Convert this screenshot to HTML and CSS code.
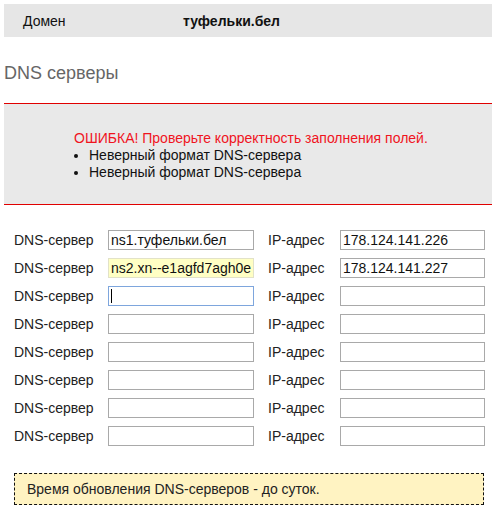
FILE: index.html
```html
<!DOCTYPE html>
<html lang="ru">
<head>
<meta charset="utf-8">
<title>DNS серверы</title>
<link rel="stylesheet" href="styles.css">
</head>
<body>
<div class="page">
  <div class="domain-bar">
    <span class="domain-label">Домен</span>
    <span class="domain-value">туфельки.бел</span>
  </div>
  <h2 class="section-title">DNS серверы</h2>
  <div class="error-box">
    <div class="error-inner">
      <div class="error-title">ОШИБКА! Проверьте корректность заполнения полей.</div>
      <ul class="error-list">
        <li>Неверный формат DNS-сервера</li>
        <li>Неверный формат DNS-сервера</li>
      </ul>
    </div>
  </div>
  <form class="dns-form">
    <div class="dns-row">
      <label class="lbl">DNS-сервер</label><input class="field" type="text" value="ns1.туфельки.бел">
      <label class="lbl">IP-адрес</label><input class="field ip" type="text" value="178.124.141.226">
    </div>
    <div class="dns-row">
      <label class="lbl">DNS-сервер</label><input class="field invalid" type="text" value="ns2.xn--e1agfd7agh0e.xn--90ais">
      <label class="lbl">IP-адрес</label><input class="field ip" type="text" value="178.124.141.227">
    </div>
    <div class="dns-row">
      <label class="lbl">DNS-сервер</label><span class="field focused"><span class="caret"></span></span>
      <label class="lbl">IP-адрес</label><input class="field ip" type="text">
    </div>
    <div class="dns-row">
      <label class="lbl">DNS-сервер</label><input class="field" type="text">
      <label class="lbl">IP-адрес</label><input class="field ip" type="text">
    </div>
    <div class="dns-row">
      <label class="lbl">DNS-сервер</label><input class="field" type="text">
      <label class="lbl">IP-адрес</label><input class="field ip" type="text">
    </div>
    <div class="dns-row">
      <label class="lbl">DNS-сервер</label><input class="field" type="text">
      <label class="lbl">IP-адрес</label><input class="field ip" type="text">
    </div>
    <div class="dns-row">
      <label class="lbl">DNS-сервер</label><input class="field" type="text">
      <label class="lbl">IP-адрес</label><input class="field ip" type="text">
    </div>
    <div class="dns-row">
      <label class="lbl">DNS-сервер</label><input class="field" type="text">
      <label class="lbl">IP-адрес</label><input class="field ip" type="text">
    </div>
  </form>
  <div class="note">Время обновления DNS-серверов - до суток.</div>
</div>
</body>
</html>
```
FILE: styles.css
```css
html, body {
  margin: 0;
  padding: 0;
  background: #fff;
}
body {
  font-family: "Liberation Sans", Arial, sans-serif;
  font-size: 14px;
  color: #222;
  overflow: hidden;
}
.page {
  padding: 4px 0 0 4px;
  width: 488px;
}
.domain-bar {
  background: #e6e6e6;
  height: 33px;
  display: flex;
  align-items: center;
  font-size: 14px;
  color: #111;
}
.domain-label {
  padding-left: 19px;
  width: 160px;
}
.domain-value {
  font-weight: bold;
}
.section-title {
  margin: 0;
  font-weight: normal;
  font-size: 18px;
  color: #666;
  height: 66px;
  line-height: 22px;
  padding-top: 25px;
  box-sizing: border-box;
}
.error-box {
  background: #e9e9e9;
  border-top: 1px solid #e00000;
  border-bottom: 1px solid #e00000;
  height: 102px;
  box-sizing: border-box;
  padding: 26px 0 0 70px;
}
.error-title {
  color: #f0141e;
  line-height: 17px;
}
.error-list {
  margin: 0;
  padding: 0 0 0 15px;
  line-height: 17px;
  color: #111;
}
.error-list li {
  list-style: disc;
}
.dns-form {
  margin: 21px 0 0 0;
  padding-left: 10px;
}
.dns-row {
  display: grid;
  grid-template-columns: 94px 146px 86px 145px;
  align-items: center;
  height: 28px;
}
.lbl {
  color: #222;
}
.dns-row .lbl:nth-of-type(2) {
  padding-left: 14px;
}
.field {
  box-sizing: border-box;
  height: 20px;
  width: 146px;
  border: 1px solid #a9a9a9;
  background: #fff;
  font-family: "Liberation Sans", Arial, sans-serif;
  font-size: 14px;
  color: #111;
  padding: 0 2px;
  margin: 0;
  outline: none;
  display: block;
}
.field.ip {
  width: 145px;
}
.field.invalid {
  background: #ffffc4;
  border-color: #e2e2c8;
}
.field.focused {
  border-color: #7ea6dd;
  display: flex;
  align-items: center;
  padding-left: 2px;
}
.caret {
  width: 1px;
  height: 14px;
  background: #000;
}
.note {
  margin: 23px 0 0 10px;
  width: 470px;
  height: 32px;
  box-sizing: border-box;
  border: 1px dashed #111;
  background: #fff3c2;
  padding-left: 12px;
  display: flex;
  align-items: center;
  color: #222;
}
```
